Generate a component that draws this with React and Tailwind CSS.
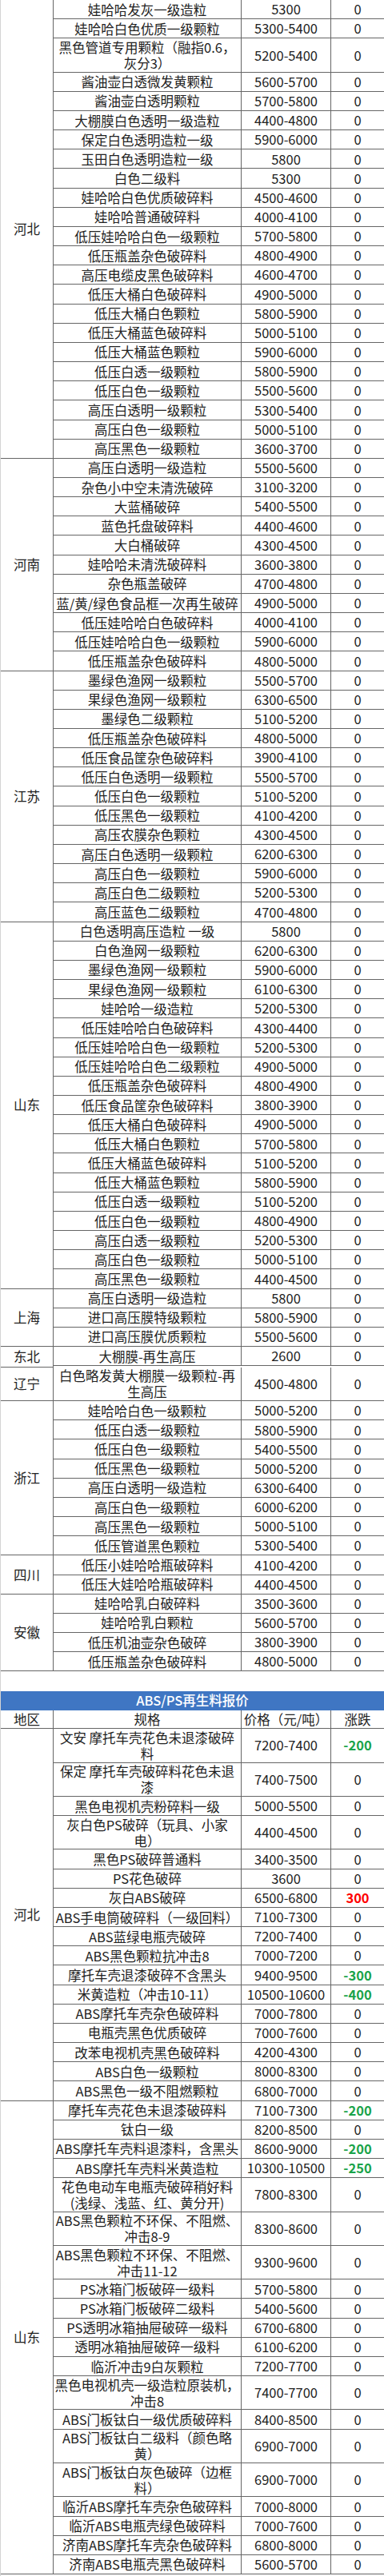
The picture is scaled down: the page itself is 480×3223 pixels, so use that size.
import React from 'react';

const S = 'h-[24.17px]';
const D = 'h-[42.4px]';

const pe = [
  {
    region: '河北',
    rows: [
      ['娃哈哈发灰一级造粒', '5300', '0'],
      ['娃哈哈白色优质一级颗粒', '5300-5400', '0'],
      ['黑色管道专用颗粒（融指0.6，\n灰分3）', '5200-5400', '0'],
      ['酱油壶白透微发黄颗粒', '5600-5700', '0'],
      ['酱油壶白透明颗粒', '5700-5800', '0'],
      ['大棚膜白色透明一级造粒', '4400-4800', '0'],
      ['保定白色透明造粒一级', '5900-6000', '0'],
      ['玉田白色透明造粒一级', '5800', '0'],
      ['白色二级料', '5300', '0'],
      ['娃哈哈白色优质破碎料', '4500-4600', '0'],
      ['娃哈哈普通破碎料', '4000-4100', '0'],
      ['低压娃哈哈白色一级颗粒', '5700-5800', '0'],
      ['低压瓶盖杂色破碎料', '4800-4900', '0'],
      ['高压电缆皮黑色破碎料', '4600-4700', '0'],
      ['低压大桶白色破碎料', '4900-5000', '0'],
      ['低压大桶白色颗粒', '5800-5900', '0'],
      ['低压大桶蓝色破碎料', '5000-5100', '0'],
      ['低压大桶蓝色颗粒', '5900-6000', '0'],
      ['低压白透一级颗粒', '5800-5900', '0'],
      ['低压白色一级颗粒', '5500-5600', '0'],
      ['高压白透明一级颗粒', '5300-5400', '0'],
      ['高压白色一级颗粒', '5000-5100', '0'],
      ['高压黑色一级颗粒', '3600-3700', '0'],
    ],
  },
  {
    region: '河南',
    rows: [
      ['高压白透明一级造粒', '5500-5600', '0'],
      ['杂色小中空未清洗破碎', '3100-3200', '0'],
      ['大蓝桶破碎', '5400-5500', '0'],
      ['蓝色托盘破碎料', '4400-4600', '0'],
      ['大白桶破碎', '4300-4500', '0'],
      ['娃哈哈未清洗破碎料', '3600-3800', '0'],
      ['杂色瓶盖破碎', '4700-4800', '0'],
      ['蓝/黄/绿色食品框一次再生破碎', '4900-5000', '0'],
      ['低压娃哈哈白色破碎料', '4000-4100', '0'],
      ['低压娃哈哈白色一级颗粒', '5900-6000', '0'],
      ['低压瓶盖杂色破碎料', '4800-5000', '0'],
    ],
  },
  {
    region: '江苏',
    rows: [
      ['墨绿色渔网一级颗粒', '5500-5700', '0'],
      ['果绿色渔网一级颗粒', '6300-6500', '0'],
      ['墨绿色二级颗粒', '5100-5200', '0'],
      ['低压瓶盖杂色破碎料', '4800-5000', '0'],
      ['低压食品筐杂色破碎料', '3900-4100', '0'],
      ['低压白色透明一级颗粒', '5500-5700', '0'],
      ['低压白色一级颗粒', '5100-5200', '0'],
      ['低压黑色一级颗粒', '4100-4200', '0'],
      ['高压农膜杂色颗粒', '4300-4500', '0'],
      ['高压白色透明一级颗粒', '6200-6300', '0'],
      ['高压白色一级颗粒', '5900-6000', '0'],
      ['高压白色二级颗粒', '5200-5300', '0'],
      ['高压蓝色二级颗粒', '4700-4800', '0'],
    ],
  },
  {
    region: '山东',
    rows: [
      ['白色透明高压造粒 一级', '5800', '0'],
      ['白色渔网一级颗粒', '6200-6300', '0'],
      ['墨绿色渔网一级颗粒', '5900-6000', '0'],
      ['果绿色渔网一级颗粒', '6100-6300', '0'],
      ['娃哈哈一级造粒', '5200-5300', '0'],
      ['低压娃哈哈白色破碎料', '4300-4400', '0'],
      ['低压娃哈哈白色一级颗粒', '5200-5300', '0'],
      ['低压娃哈哈白色二级颗粒', '4900-5000', '0'],
      ['低压瓶盖杂色破碎料', '4800-4900', '0'],
      ['低压食品筐杂色破碎料', '3800-3900', '0'],
      ['低压大桶白色破碎料', '4900-5000', '0'],
      ['低压大桶白色颗粒', '5700-5800', '0'],
      ['低压大桶蓝色破碎料', '5100-5200', '0'],
      ['低压大桶蓝色颗粒', '5800-5900', '0'],
      ['低压白透一级颗粒', '5100-5200', '0'],
      ['低压白色一级颗粒', '4800-4900', '0'],
      ['高压白透一级颗粒', '5200-5300', '0'],
      ['高压白色一级颗粒', '5000-5100', '0'],
      ['高压黑色一级颗粒', '4400-4500', '0'],
    ],
  },
  {
    region: '上海',
    rows: [
      ['高压白透明一级造粒', '5800', '0'],
      ['进口高压膜特级颗粒', '5800-5900', '0'],
      ['进口高压膜优质颗粒', '5500-5600', '0'],
    ],
  },
  {
    region: '东北',
    rows: [['大棚膜-再生高压', '2600', '0']],
  },
  {
    region: '辽宁',
    rows: [['白色略发黄大棚膜一级颗粒-再\n生高压', '4500-4800', '0']],
  },
  {
    region: '浙江',
    rows: [
      ['娃哈哈白色一级颗粒', '5000-5200', '0'],
      ['低压白透一级颗粒', '5800-5900', '0'],
      ['低压白色一级颗粒', '5400-5500', '0'],
      ['低压黑色一级颗粒', '5000-5200', '0'],
      ['高压白透明一级造粒', '6300-6400', '0'],
      ['高压白色一级颗粒', '6000-6200', '0'],
      ['高压黑色一级颗粒', '5000-5100', '0'],
      ['低压管道黑色颗粒', '5300-5400', '0'],
    ],
  },
  {
    region: '四川',
    rows: [
      ['低压小娃哈哈瓶破碎料', '4100-4200', '0'],
      ['低压大娃哈哈瓶破碎料', '4400-4500', '0'],
    ],
  },
  {
    region: '安徽',
    rows: [
      ['娃哈哈乳白破碎料', '3500-3600', '0'],
      ['娃哈哈乳白颗粒', '5600-5700', '0'],
      ['低压机油壶杂色破碎', '3800-3900', '0'],
      ['低压瓶盖杂色破碎料', '4800-5000', '0'],
    ],
  },
];

const abs = [
  {
    region: '河北',
    rows: [
      ['文安 摩托车壳花色未退漆破碎\n料', '7200-7400', '-200'],
      ['保定 摩托车壳破碎料花色未退\n漆', '7400-7500', '0'],
      ['黑色电视机壳粉碎料一级', '5000-5500', '0'],
      ['灰白色PS破碎（玩具、小家\n电）', '4400-4500', '0'],
      ['黑色PS破碎普通料', '3400-3500', '0'],
      ['PS花色破碎', '3600', '0'],
      ['灰白ABS破碎', '6500-6800', '300'],
      ['ABS手电筒破碎料（一级回料）', '7100-7300', '0'],
      ['ABS蓝绿电瓶壳破碎', '7200-7400', '0'],
      ['ABS黑色颗粒抗冲击8', '7000-7200', '0'],
      ['摩托车壳退漆破碎不含黑头', '9400-9500', '-300'],
      ['米黄造粒（冲击10-11）', '10500-10600', '-400'],
      ['ABS摩托车壳杂色破碎料', '7000-7800', '0'],
      ['电瓶壳黑色优质破碎', '7000-7600', '0'],
      ['改苯电视机壳黑色破碎料', '4200-4300', '0'],
      ['ABS白色一级颗粒', '8000-8300', '0'],
      ['ABS黑色一级不阻燃颗粒', '6800-7000', '0'],
    ],
  },
  {
    region: '山东',
    rows: [
      ['摩托车壳花色未退漆破碎料', '7100-7300', '-200'],
      ['钛白一级', '8200-8500', '0'],
      ['ABS摩托车壳料退漆料，含黑头', '8600-9000', '-200'],
      ['ABS摩托车壳料米黄造粒', '10300-10500', '-250'],
      ['花色电动车电瓶壳破碎稍好料\n(浅绿、浅蓝、红、黄分开)', '7800-8300', '0'],
      ['ABS黑色颗粒不环保、不阻燃、\n冲击8-9', '8300-8600', '0'],
      ['ABS黑色颗粒不环保、不阻燃、\n冲击11-12', '9300-9600', '0'],
      ['PS冰箱门板破碎一级料', '5700-5800', '0'],
      ['PS冰箱门板破碎二级料', '5400-5600', '0'],
      ['PS透明冰箱抽屉破碎一级料', '6700-6800', '0'],
      ['透明冰箱抽屉破碎一级料', '6100-6200', '0'],
      ['临沂冲击9白灰颗粒', '7200-7700', '0'],
      ['黑色电视机壳一级造粒原装机，\n冲击8', '7400-7700', '0'],
      ['ABS门板钛白一级优质破碎料', '8400-8500', '0'],
      ['ABS门板钛白二级料（颜色略\n黄）', '6900-7000', '0'],
      ['ABS门板钛白灰色破碎（边框\n料）', '6900-7000', '0'],
      ['临沂ABS摩托车壳杂色破碎料', '7000-8000', '0'],
      ['临沂ABS电瓶壳绿色破碎料', '7000-7600', '0'],
      ['济南ABS摩托车壳杂色破碎料', '6800-8000', '0'],
      ['济南ABS电瓶壳黑色破碎料', '5600-5700', '0'],
    ],
  },
];

function Change({ v }) {
  if (v.startsWith('-')) return <span className="font-bold text-[#1aa34a]">{v}</span>;
  if (v !== '0') return <span className="font-bold text-[#ff0000]">{v}</span>;
  return <span>{v}</span>;
}

function Row({ spec, price, chg }) {
  const h = spec.includes('\n') ? D : S;
  return (
    <div className={`flex ${h} border-b border-[#666666]`}>
      <div className="w-[235px] shrink-0 border-r border-[#666666] flex items-center justify-center text-center leading-[20px] whitespace-pre">
        {spec}
      </div>
      <div className="w-[112px] shrink-0 border-r border-[#666666] flex items-center justify-center whitespace-nowrap">
        {price}
      </div>
      <div className="flex-1 flex items-center justify-center">
        <Change v={chg} />
      </div>
    </div>
  );
}

function Group({ region, rows }) {
  return (
    <div className="flex">
      <div className="w-[66px] shrink-0 border-r border-b border-[#666666] flex items-center justify-center">
        {region}
      </div>
      <div className="flex-1 flex flex-col">
        {rows.map((r, i) => (
          <Row key={i} spec={r[0]} price={r[1]} chg={r[2]} />
        ))}
      </div>
    </div>
  );
}

export default function App() {
  return (
    <div
      className="w-[480px] bg-white border-l border-[#d4d4d4] text-[16.5px] text-[#222222] pb-[2px]"
      style={{ fontFamily: '"Noto Sans CJK SC", "Noto Sans", sans-serif' }}
    >
      {pe.map((g, i) => (
        <Group key={i} region={g.region} rows={g.rows} />
      ))}
      <div className="h-[24.17px]" />
      <div className="h-[24.17px] bg-[#3f76c3] text-white flex items-center justify-center font-medium">
        ABS/PS再生料报价
      </div>
      <div className="flex h-[23.5px] border-b border-[#666666]">
        <div className="w-[66px] shrink-0 border-r border-[#666666] flex items-center justify-center">地区</div>
        <div className="w-[235px] shrink-0 border-r border-[#666666] flex items-center justify-center">规格</div>
        <div className="w-[112px] shrink-0 border-r border-[#666666] flex items-center justify-center whitespace-nowrap">价格（元/吨）</div>
        <div className="flex-1 flex items-center justify-center">涨跌</div>
      </div>
      {abs.map((g, i) => (
        <Group key={i} region={g.region} rows={g.rows} />
      ))}
    </div>
  );
}
